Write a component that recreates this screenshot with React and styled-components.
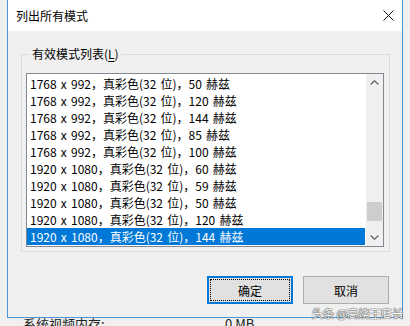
import styled, { createGlobalStyle } from "styled-components";

const GlobalStyle = createGlobalStyle`
  html, body {
    margin: 0;
    padding: 0;
    background: #f0f0f0;
    overflow: hidden;
  }
  body {
    font-family: "Noto Sans CJK SC", "Noto Sans", sans-serif;
    width: 410px;
    height: 326px;
  }
`;

const modes = [
  "1768 x 992，真彩色(32 位)，50 赫兹",
  "1768 x 992，真彩色(32 位)，120 赫兹",
  "1768 x 992，真彩色(32 位)，144 赫兹",
  "1768 x 992，真彩色(32 位)，85 赫兹",
  "1768 x 992，真彩色(32 位)，100 赫兹",
  "1920 x 1080，真彩色(32 位)，60 赫兹",
  "1920 x 1080，真彩色(32 位)，59 赫兹",
  "1920 x 1080，真彩色(32 位)，50 赫兹",
  "1920 x 1080，真彩色(32 位)，120 赫兹",
  "1920 x 1080，真彩色(32 位)，144 赫兹",
];

export default function App() {
  return (
    <>
      <GlobalStyle />
      <Desk>
        <Dialog>
          <TitleBar>
            <Title>列出所有模式</Title>
            <svg width="11" height="11" viewBox="0 0 11 11">
              <path d="M0.5 0.5 L10.5 10.5 M10.5 0.5 L0.5 10.5" stroke="#111" strokeWidth="1" fill="none" />
            </svg>
          </TitleBar>
          <Body>
            <GroupBox>
              <Legend>
                有效模式列表(<u>L</u>)
              </Legend>
              <ListBox>
                <Rows>
                  {modes.map((m, i) => (
                    <Row key={i} $selected={i === modes.length - 1}>
                      {m}
                    </Row>
                  ))}
                </Rows>
                <ScrollBar>
                  <Arrow>
                    <svg width="9" height="5" viewBox="0 0 9 5">
                      <path d="M0.5 4.5 L4.5 0.8 L8.5 4.5" stroke="#606060" strokeWidth="1.2" fill="none" />
                    </svg>
                  </Arrow>
                  <Track>
                    <Thumb />
                  </Track>
                  <Arrow>
                    <svg width="9" height="5" viewBox="0 0 9 5">
                      <path d="M0.5 0.5 L4.5 4.2 L8.5 0.5" stroke="#606060" strokeWidth="1.2" fill="none" />
                    </svg>
                  </Arrow>
                </ScrollBar>
              </ListBox>
            </GroupBox>
            <ButtonRow>
              <Button $primary>
                <Focus>确定</Focus>
              </Button>
              <Button>取消</Button>
            </ButtonRow>
          </Body>
        </Dialog>
        <BehindRow>
          <span>系统视频内存:</span>
          <span>0 MB</span>
        </BehindRow>
        <Watermark>头条 @高烧王店长</Watermark>
      </Desk>
    </>
  );
}

const Desk = styled.div`
  position: relative;
  width: 410px;
  height: 326px;
  overflow: hidden;
`;

const Dialog = styled.div`
  position: relative;
  z-index: 1;
  margin-left: 7px;
  width: 394px;
  background: #f0f0f0;
  border: 1px solid #4b95dc;
  border-top: 0;
  display: flex;
  flex-direction: column;
`;

const TitleBar = styled.div`
  height: 31px;
  background: #ffffff;
  display: flex;
  align-items: center;
  justify-content: space-between;
  padding: 0 8px 0 8px;
  svg {
    margin-top: -1px;
  }
`;

const Title = styled.span`
  font-size: 12px;
  color: #000;
  margin-top: -1px;
`;

const Body = styled.div`
  display: flex;
  flex-direction: column;
  padding: 15px 12px 13px 13px;
`;

const GroupBox = styled.fieldset`
  margin: 0;
  padding: 11px 5px 4px 4px;
  border: 1px solid #dcdcdc;
  min-width: 0;
`;

const Legend = styled.legend`
  font-size: 12px;
  line-height: 16px;
  color: #000;
  padding: 0 2px;
  margin-left: 4px;
  u {
    text-decoration: underline;
    text-underline-offset: 2px;
  }
`;

const ListBox = styled.div`
  display: flex;
  height: 172px;
  background: #fff;
  border: 1px solid #828790;
`;

const Rows = styled.div`
  flex: 1;
  display: flex;
  flex-direction: column;
  padding-top: 1px;
`;

const Row = styled.div`
  height: 17px;
  line-height: 17px;
  font-size: 12px;
  word-spacing: 1.5px;
  padding-left: 3px;
  white-space: nowrap;
  color: ${(p) => (p.$selected ? "#ffffff" : "#000000")};
  background: ${(p) => (p.$selected ? "#0078d7" : "transparent")};
`;

const ScrollBar = styled.div`
  width: 17px;
  margin-left: 1px;
  background: #f0f0f0;
  display: flex;
  flex-direction: column;
`;

const Arrow = styled.div`
  height: 17px;
  display: flex;
  align-items: center;
  justify-content: center;
`;

const Track = styled.div`
  flex: 1;
  display: flex;
  flex-direction: column;
  justify-content: flex-end;
  padding: 0 1px 8px 1px;
`;

const Thumb = styled.div`
  height: 19px;
  background: #cdcdcd;
`;

const ButtonRow = styled.div`
  display: flex;
  justify-content: flex-end;
  gap: 10px;
  margin-top: 24px;
  padding-right: 1px;
`;

const Button = styled.div`
  box-sizing: border-box;
  width: 86px;
  height: 28px;
  background: #e1e1e1;
  border: ${(p) => (p.$primary ? "2px solid #0078d7" : "1px solid #adadad")};
  display: flex;
  align-items: center;
  justify-content: center;
  font-size: 12px;
  color: #000;
  padding: ${(p) => (p.$primary ? "1px" : "0")};
`;

const Focus = styled.span`
  flex: 1;
  align-self: stretch;
  display: flex;
  align-items: center;
  justify-content: center;
  border: 1px dotted #000;
`;

const BehindRow = styled.div`
  display: flex;
  padding-left: 23px;
  font-size: 13px;
  line-height: 13px;
  color: #222;
  margin-top: -1px;
  span:first-child {
    width: 202px;
  }
`;

const Watermark = styled.div`
  position: absolute;
  right: 7px;
  bottom: 5px;
  z-index: 2;
  font-size: 11.5px;
  color: #ffffff;
  text-shadow: 0 0 1px #444, 0 0 1px #444, 0 0 1px #444;
  letter-spacing: -0.3px;
`;
